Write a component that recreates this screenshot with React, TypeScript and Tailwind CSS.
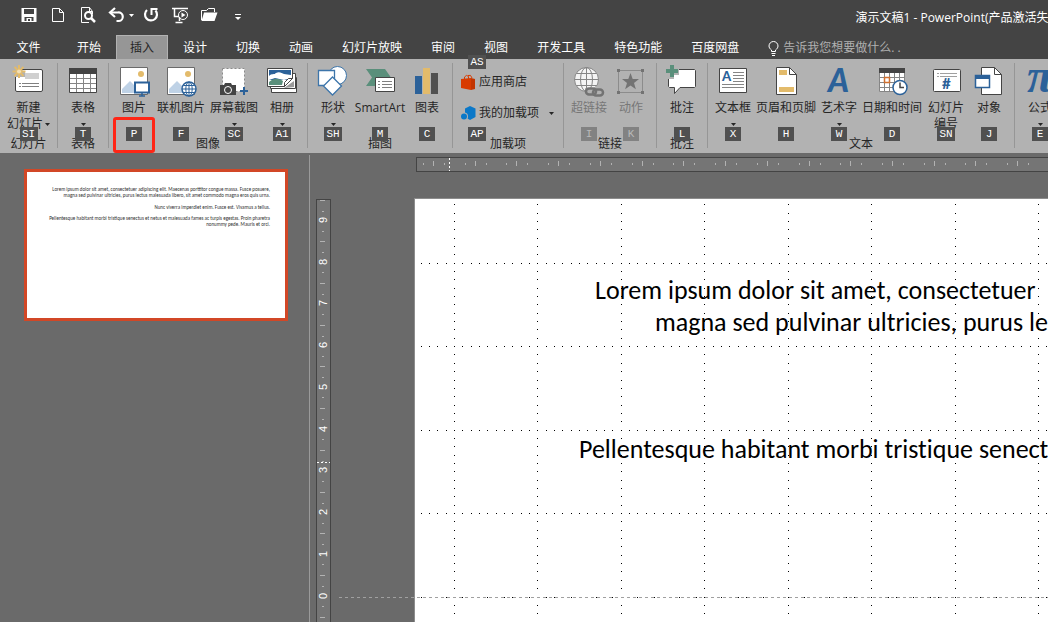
import type { ReactNode } from "react";
import clsx from "clsx";

const INK = "#444444";
const BLUE = "#2b6199";
const GREEN = "#5a8f7b";
const SAND = "#e3bb6b";

const Icon = ({ children, size = 32 }: { children: ReactNode; size?: number }) => (
    <svg width={size} height={size} viewBox={`0 0 ${size} ${size}`} fill="none" className="shrink-0 overflow-visible" aria-hidden="true">
        {children}
    </svg>
);

const Caret = () => (
    <svg width="5" height="3" viewBox="0 0 5 3" className="shrink-0" aria-hidden="true">
        <path d="M0 0h5L2.5 3z" fill="currentColor" />
    </svg>
);

/* ---------- quick access icons ---------- */

const SaveIcon = () => (
    <Icon size={18}>
        <path d="M1.5 1h15v14h-15z" fill="#fff" />
        <path d="M4 2h10v5H4zM4.500 10h9v4h-9z" fill={INK} />
        <path d="M6.500 11h5v4h-5z" fill="#fff" />
        <path d="M8 12h2v2H8z" fill={INK} />
    </Icon>
);

const NewIcon = () => (
    <Icon size={18}>
        <path d="M3.500 1.500h7l4 4v9h-11zM10.500 1.500v4h4" stroke="#fff" />
    </Icon>
);

const PreviewIcon = () => (
    <Icon size={18}>
        <path d="M14.500 7V4.500l-3-4h-8v15H11M11.500 .5v4h3" stroke="#fff" />
        <circle cx="10.500" cy="8.500" r="3.500" stroke="#fff" strokeWidth="2" />
        <path d="M13 11l4 4" stroke="#fff" strokeWidth="2.500" />
    </Icon>
);

const UndoIcon = () => (
    <Icon size={18}>
        <path d="M3 5.500h8a4 4 0 0 1 1 8.500H9.500" stroke="#fff" strokeWidth="2.200" />
        <path d="M8 1L3 5.500 8 10" stroke="#fff" strokeWidth="2.200" />
    </Icon>
);

const RedoIcon = () => (
    <Icon size={18}>
        <path d="M5 3A6 6 0 1 0 13.500 3.500" stroke="#fff" strokeWidth="2.200" />
        <path d="M9.500 8V2h6" stroke="#fff" strokeWidth="2" />
    </Icon>
);

const ShowIcon = () => (
    <Icon size={18}>
        <path d="M1 1.500h16M3.500 2v7.500H8M8.500 10v4M4.500 15.500h7" stroke="#fff" strokeWidth="1.500" />
        <circle cx="12" cy="8" r="4.500" stroke="#fff" />
        <path d="M10.500 5.500v5l4-2.500z" fill="#fff" />
    </Icon>
);

const OpenIcon = () => (
    <Icon size={18}>
        <path d="M1.500 13V3.500h5l2-2h6V5" stroke="#fff" />
        <path d="M4 5.500h13.500l-3 8.500H1.500z" fill="#fff" />
    </Icon>
);

const CustomizeIcon = () => (
    <Icon size={18}>
        <path d="M6 7.500h6" stroke="#fff" />
        <path d="M6 10h6l-3 3z" fill="#fff" />
    </Icon>
);

/* ---------- ribbon icons ---------- */

const NewSlideIcon = () => (
    <Icon>
        <rect x="2.500" y="3.500" width="27" height="22" rx="1.500" fill="#fff" stroke={INK} />
        <path d="M12 7h14v6H12z" fill="#d0d0d0" />
        <path d="M6 17.500h2M9 17.500h17M6 20.500h2M9 20.500h17" stroke="#808080" />
        <path d="M0 2h6l6 4v5H1z" fill="#b2b2b2" />
        <path d="M6 -1v4M6 8v4M-.500 5.500h4M8.500 5.500h4M1.500 1l3 3M7.500 7l3 3M10.500 1l-3 3M4.500 7l-3 3" stroke={SAND} strokeWidth="2" />
        <circle cx="6" cy="5.500" r="2.500" fill="#f3dfb4" stroke={SAND} />
    </Icon>
);

const TableIcon = () => (
    <Icon>
        <path d="M2.500 2.500h27v24h-27z" fill="#fff" stroke={INK} />
        <path d="M2 2h28v6H2z" fill={INK} />
        <path d="M9.500 8v18M16.500 8v18M23.500 8v18M3 12.500h26M3 17.500h26M3 22.500h26" stroke="#858585" />
    </Icon>
);

const Photo = () => (
    <>
        <path d="M2.500 1.500h27v27h-27z" fill="#fff" stroke="#6a6a6a" />
        <path d="M4 27v-4l8-8 7 7v5z" fill="#bfd2e6" />
        <circle cx="23" cy="8" r="3" fill={SAND} />
    </>
);

const PictureIcon = () => (
    <Icon>
        <Photo />
        <path d="M17 16.500h14v10H17z" fill="#fff" stroke={BLUE} strokeWidth="2" />
        <path d="M24 27v3M21 30h6" stroke={BLUE} strokeWidth="1.500" />
    </Icon>
);

const OnlinePictureIcon = () => (
    <Icon>
        <Photo />
        <circle cx="24" cy="23" r="7" fill="#fff" stroke={BLUE} strokeWidth="1.500" />
        <ellipse cx="24" cy="23" rx="3.200" ry="7" stroke={BLUE} />
        <path d="M24 16v14M17 23h14M18.500 19.500h11M18.500 26.500h11" stroke={BLUE} />
    </Icon>
);

const ScreenshotIcon = () => (
    <Icon>
        <path d="M4.500 2.500h22v23h-22z" fill="#fff" stroke="#8a8a8a" strokeDasharray="2 2" />
        <path d="M2 19h4l1-2h6l1 2h4v10H2z" fill={INK} />
        <circle cx="10" cy="24" r="3.500" stroke="#fff" />
        <path d="M26 21v8M22 25h8" stroke={BLUE} strokeWidth="2" />
    </Icon>
);

const AlbumIcon = () => (
    <Icon>
        <path d="M5.500 11.500h25v15h-25z" fill="#fff" stroke={INK} />
        <path d="M4.500 7.500h25v15h-25z" fill="#fff" stroke={INK} />
        <path d="M18 22l10-7v6z" fill="#9a9a9a" />
        <path d="M1.500 2.500h25v10l-8 8h-17z" fill="#fff" stroke={INK} />
        <path d="M3 4h22v7l-4 3H3z" fill={BLUE} />
        <path d="M3 10c3-3 5-1 7-3 3-2 6 0 8 1l7 1v3l-7 2-9-2-6 2z" fill="#fff" />
        <path d="M3 16c5-4 9-4 14-1l-1 4H3z" fill={GREEN} />
        <path d="M18.500 20.500v-4l4-4h4z" fill="#fff" stroke={INK} />
    </Icon>
);

const ShapesIcon = () => (
    <Icon>
        <circle cx="20.500" cy="9.500" r="9" fill="#fff" stroke="#3d75aa" />
        <path d="M1.500 4.500h16v15h-16z" fill="#fff" stroke="#3d75aa" strokeWidth="1.300" />
        <path d="M15.500 11l9 9-9 9-9-9z" fill="#fff" stroke="#3d75aa" strokeWidth="1.300" />
    </Icon>
);

const SmartArtIcon = () => (
    <Icon>
        <path d="M2 3h19l6 8.500L21 20H2l6-8.500z" fill={GREEN} />
        <path d="M11.500 11.500h19v14h-19z" fill="#fff" stroke={INK} />
        <path d="M14 15.500h2M18 15.500h10M14 18.500h2M18 18.500h10M14 21.500h2M18 21.500h10" stroke="#808080" />
    </Icon>
);

const ChartIcon = () => (
    <Icon>
        <path d="M4 10h7v18H4z" fill={BLUE} />
        <path d="M12 2h7v26h-7z" fill={SAND} />
        <path d="M20 7h7v21h-7z" fill="#505050" />
    </Icon>
);

const StoreIcon = () => (
    <Icon size={16}>
        <path d="M0 5l10-1v12L0 14z" fill="#d83b01" />
        <path d="M10 4l4 1v10l-4 1z" fill="#c23501" />
        <path d="M3.500 5V3q2-3 4-.500V5M7 1.500q3-1.500 4 2.500" stroke="#d83b01" />
    </Icon>
);

const AddinIcon = () => (
    <Icon size={16}>
        <path d="M9 1l5.500 2.500v8.500L9 15l-5-3V3.500z" fill="#0b78c8" />
        <circle cx="3" cy="11.500" r="4" fill="#b2b2b2" />
        <circle cx="3" cy="11.500" r="3" fill="#0b78c8" />
    </Icon>
);

const LinkIcon = () => (
    <Icon>
        <circle cx="13.500" cy="13.500" r="12" fill="#f4f4f4" stroke="#858585" />
        <ellipse cx="13.500" cy="13.500" rx="6" ry="12" stroke="#858585" />
        <path d="M13.500 1.500v24M1.500 13.500h24M3.500 7.500h20M3.500 19.500h20" stroke="#858585" />
        <path d="M12 22h8l4-2h8v12H12z" fill="#b2b2b2" />
        <rect x="13" y="22.500" width="10" height="6" rx="3" stroke="#737373" strokeWidth="2.500" />
        <rect x="20" y="23.500" width="10" height="6" rx="3" stroke="#737373" strokeWidth="2.500" />
    </Icon>
);

const ActionIcon = () => (
    <Icon>
        <path d="M3.500 4.500h24v22h-24z" stroke="#8c8c8c" />
        <path d="M2 3h3v3H2zM26 3h3v3h-3zM2 25h3v3H2zM26 25h3v3h-3z" fill="#737373" />
        <path d="M15.500 7l2.200 6h6.300l-5 3.900 1.900 6.300-5.400-3.800-5.400 3.800 1.900-6.300L7 13h6.300z" fill="#737373" />
    </Icon>
);

const CommentIcon = () => (
    <Icon>
        <path d="M3.500 3.500h25l1 1v16l-1 1H14l-5.500 6v-6h-5l-1-1v-16z" fill="#fff" stroke={INK} />
        <path d="M-1 -2h9v5h5v6H8v4H-1z" fill="#b2b2b2" />
        <path d="M6 -1v12M0 5h12" stroke={GREEN} strokeWidth="4" />
    </Icon>
);

const TextBoxIcon = () => (
    <Icon>
        <path d="M2.500 2.500h27v24h-27z" fill="#fff" stroke={INK} />
        <text x="5" y="15" fill={BLUE} className="font-[Lato] text-[13px] font-black">A</text>
        <path d="M16 6.500h11M16 9.500h11M16 12.500h11M16 15.500h11M5 18.500h22M5 21.500h22" stroke="#858585" />
    </Icon>
);

const HeaderFooterIcon = () => (
    <Icon>
        <path d="M6.500 1.500h13l7 7v20h-20z" fill="#fff" stroke={INK} />
        <path d="M19.500 1.500v7h7" stroke={INK} />
        <path d="M9 4h8v5H9zM9 21h15v5H9z" fill={SAND} />
    </Icon>
);

const WordArtIcon = () => (
    <Icon>
        <text x="5" y="26" fill={BLUE} className="font-[Lato] text-[32px] font-black italic">A</text>
    </Icon>
);

const DateIcon = () => (
    <Icon>
        <path d="M3.500 2.500h25v23h-25z" fill="#fff" stroke="#858585" />
        <path d="M3 2h26v5H3z" fill={INK} />
        <path d="M8.500 7v18M13.500 7v18M18.500 7v18M23.500 7v18M4 11.500h25M4 16.500h25M4 21.500h25" stroke="#858585" />
        <path d="M8.500 11.500h5v5h-5z" stroke="#d07030" strokeWidth="1.500" />
        <circle cx="24" cy="21.500" r="7" fill="#fff" stroke={BLUE} strokeWidth="1.500" />
        <path d="M24 16.500v5h4" stroke={INK} strokeWidth="1.500" />
    </Icon>
);

const SlideNumberIcon = () => (
    <Icon>
        <rect x="3.500" y="3.500" width="27" height="22" rx="1" fill="#fff" stroke={INK} />
        <path d="M7 7.500h2M10 7.500h17M7 10.500h2M10 10.500h17" stroke="#a0a0a0" />
        <text x="12" y="23" fill={BLUE} className="font-[Lato] text-[15px] font-black">#</text>
    </Icon>
);

const ObjectIcon = () => (
    <Icon>
        <path d="M8.500 1.500h13l7 7v20h-20z" fill="#fff" stroke={INK} />
        <path d="M21.500 1.500v7h7" stroke={INK} />
        <path d="M2.500 9.500h14v12h-14z" fill="#fff" stroke={BLUE} strokeWidth="1.500" />
        <path d="M2 9h15v4H2z" fill={BLUE} />
    </Icon>
);

const FormulaIcon = () => (
    <Icon>
        <text x="3" y="26" fill={BLUE} className="font-['Liberation_Serif'] text-[48px] font-bold italic">π</text>
    </Icon>
);

const SymbolIcon = () => (
    <Icon>
        <text x="4" y="26" fill={INK} className="font-['Liberation_Serif'] text-[32px]">Ω</text>
    </Icon>
);

/* ---------- ribbon parts ---------- */

const KeyTip = ({ text, className = "top-16", dim = false }: { text: string; className?: string; dim?: boolean }) => (
    <span
        className={clsx(
            "absolute left-1/2 z-10 h-[14px] -translate-x-1/2 text-center font-['Liberation_Mono',monospace] text-[11px] leading-[14px]",
            text.length > 1 ? "w-[18px]" : "w-4",
            dim ? "bg-[#828282] text-[#b9b9b9]" : "bg-[#505050] text-white",
            className
        )}
    >
        {text}
    </span>
);

type ToolProps = {
    icon: ReactNode;
    label: string;
    second?: string;
    tip?: string;
    width?: string;
    caret?: boolean;
    dim?: boolean;
    marked?: boolean;
};

const Tool = ({ icon, label, second, tip, width = "w-[42px]", caret, dim, marked }: ToolProps) => (
    <button
        disabled={dim}
        className={clsx("relative flex h-[72px] shrink-0 flex-col items-center pt-[3px] whitespace-nowrap", width, dim && "text-[#777777]")}
    >
        {icon}
        <span className="mt-0.5 leading-4">{label}</span>
        {(second || caret) && (
            <span className="flex h-4 items-center gap-0.5 leading-4">
                {second}
                {caret && <Caret />}
            </span>
        )}
        {tip && <KeyTip text={tip} dim={dim} />}
        {marked && <span className="absolute top-[54px] left-0 z-20 h-9 w-full rounded-[3px] border-3 border-[#ff2616]" />}
    </button>
);

const Group = ({ label, children }: { label: string; children: ReactNode }) => (
    <section aria-label={label} className="flex shrink-0">
        <div className="flex flex-col px-1">
            <div className="flex h-[72px]">{children}</div>
            <p className="text-center leading-[18px]">{label}</p>
        </div>
        <div className="h-[85px] w-px bg-[#969696]" />
    </section>
);

const Ribbon = () => (
    <div className="flex h-[94px] shrink-0 overflow-x-clip bg-[#b2b2b2] pt-1 text-[#262626]">
        <Group label="幻灯片">
            <Tool icon={<NewSlideIcon />} label="新建" second="幻灯片" tip="SI" width="w-[49px]" caret />
        </Group>
        <Group label="表格">
            <Tool icon={<TableIcon />} label="表格" tip="T" caret />
        </Group>
        <Group label="图像">
            <Tool icon={<PictureIcon />} label="图片" tip="P" marked />
            <Tool icon={<OnlinePictureIcon />} label="联机图片" tip="F" width="w-[52px]" />
            <Tool icon={<ScreenshotIcon />} label="屏幕截图" tip="SC" width="w-[54px]" caret />
            <Tool icon={<AlbumIcon />} label="相册" tip="A1" caret />
        </Group>
        <Group label="插图">
            <Tool icon={<ShapesIcon />} label="形状" tip="SH" caret />
            <Tool icon={<SmartArtIcon />} label="SmartArt" tip="M" width="w-[52px]" />
            <Tool icon={<ChartIcon />} label="图表" tip="C" />
        </Group>
        <Group label="加载项">
            <div className="flex w-[102px] flex-col items-start gap-[15px] pt-[11px] pl-1">
                <button className="relative flex items-center gap-0.5 leading-4">
                    <StoreIcon />
                    应用商店
                    <span className="absolute -top-[19px] left-4"><KeyTip text="AS" className="top-0" /></span>
                </button>
                <button className="relative flex items-center gap-0.5 leading-4">
                    <AddinIcon />
                    我的加载项
                    <span className="pl-2"><Caret /></span>
                    <span className="absolute top-[22px] left-4"><KeyTip text="AP" className="top-0" /></span>
                </button>
            </div>
        </Group>
        <Group label="链接">
            <Tool icon={<LinkIcon />} label="超链接" tip="I" dim />
            <Tool icon={<ActionIcon />} label="动作" tip="K" dim />
        </Group>
        <Group label="批注">
            <Tool icon={<CommentIcon />} label="批注" tip="L" />
        </Group>
        <Group label="文本">
            <Tool icon={<TextBoxIcon />} label="文本框" tip="X" caret />
            <Tool icon={<HeaderFooterIcon />} label="页眉和页脚" tip="H" width="w-16" />
            <Tool icon={<WordArtIcon />} label="艺术字" tip="W" caret />
            <Tool icon={<DateIcon />} label="日期和时间" tip="D" width="w-16" />
            <Tool icon={<SlideNumberIcon />} label="幻灯片" second="编号" tip="SN" width="w-11" />
            <Tool icon={<ObjectIcon />} label="对象" tip="J" />
        </Group>
        <Group label="符号">
            <Tool icon={<FormulaIcon />} label="公式" tip="E" caret />
            <Tool icon={<SymbolIcon />} label="符号" />
        </Group>
    </div>
);

/* ---------- title bar and tabs ---------- */

const quickLeft = [
    { name: "保存", icon: <SaveIcon /> },
    { name: "新建", icon: <NewIcon /> },
    { name: "打印预览", icon: <PreviewIcon /> },
    { name: "撤消", icon: <UndoIcon /> },
];

const quickRight = [
    { name: "恢复", icon: <RedoIcon /> },
    { name: "从头开始", icon: <ShowIcon /> },
    { name: "打开", icon: <OpenIcon /> },
    { name: "自定义", icon: <CustomizeIcon /> },
];

const tabs = ["开始", "插入", "设计", "切换", "动画", "幻灯片放映", "审阅", "视图", "开发工具", "特色功能", "百度网盘"];

const TitleBar = () => (
    <header className="flex h-[35px] shrink-0 items-center overflow-hidden pb-1 pl-5 text-white">
        <div className="flex gap-[11px]">
            {quickLeft.map((q) => (
                <button key={q.name} aria-label={q.name}>{q.icon}</button>
            ))}
        </div>
        <button aria-label="撤消选项" className="px-1"><Caret /></button>
        <div className="ml-1 flex gap-[11px]">
            {quickRight.map((q) => (
                <button key={q.name} aria-label={q.name}>{q.icon}</button>
            ))}
        </div>
        <h1 className="-mr-4 ml-auto pt-1 whitespace-nowrap">演示文稿1 - PowerPoint(产品激活失败)</h1>
    </header>
);

const Tabs = () => (
    <nav className="flex h-6 shrink-0 items-stretch gap-px text-white">
        <button className="mr-[5px] w-[57px] pt-px">文件</button>
        {tabs.map((tab) => (
            <button
                key={tab}
                className={clsx(
                    "border border-b-0 px-[13px] whitespace-nowrap",
                    tab === "插入" ? "border-[#b2b2b2] bg-[#969696] text-[#262626]" : "border-transparent"
                )}
            >
                {tab}
            </button>
        ))}
        <label className="ml-3.5 flex items-center gap-1 pt-0.5">
            <svg width="11" height="15" viewBox="0 0 11 15" fill="none" stroke="#fff" aria-hidden="true">
                <path d="M3.500 10.500v-1.500C2 8 1 6.500 1 5a4.500 4.500 0 0 1 9 0c0 1.500-1 3-2.500 4v1.500z" />
                <path d="M3.500 12.500h4M4 14.500h3" />
            </svg>
            <input
                aria-label="操作说明搜索"
                placeholder="告诉我您想要做什么. ."
                className="w-40 bg-transparent outline-none placeholder:text-[#b0b0b0]"
            />
        </label>
    </nav>
);

/* ---------- workspace ---------- */

// one ruler unit is 41.725px, a grid dot sits every fifth of it
const UNIT = 41.725;
const STEP = 8.345;

const HorizontalRuler = () => (
    <div className="relative ml-[106px] h-[15px] shrink-0 overflow-hidden border border-r-0 border-[#444444] bg-[#757575]">
        <svg width="100%" height="13" aria-hidden="true" shapeRendering="crispEdges">
            {Array.from({ length: 60 }, (_, i) => {
                const x = Math.floor(16.5 + i * UNIT);
                return (
                    <g key={i} fill="#b2b2b2">
                        <rect x={x - 10} y="5" width="1" height="2" />
                        <rect x={x} y="3" width="1" height="5" />
                        <rect x={x + 11} y="5" width="1" height="2" />
                    </g>
                );
            })}
        </svg>
        <div className="absolute inset-y-0 left-8 w-px bg-[repeating-linear-gradient(180deg,#fff_0_2px,transparent_2px_4px)]" />
    </div>
);

const VerticalRuler = () => (
    <div className="relative mt-px ml-1.5 w-[15px] shrink-0 overflow-hidden border border-b-0 border-[#444444] bg-[#757575]">
        <svg width="13" height="100%" aria-hidden="true" shapeRendering="crispEdges">
            {Array.from({ length: 40 }, (_, i) => {
                const y = Math.floor(i * UNIT);
                return (
                    <g key={i} fill="#b2b2b2">
                        <rect x="3" y={y} width="5" height="1" />
                        <rect x="5" y={y + 11} width="2" height="1" />
                        <rect x="5" y={y + 31} width="2" height="1" />
                    </g>
                );
            })}
            {Array.from({ length: 10 }, (_, i) => (
                <text
                    key={i}
                    transform={`translate(10 ${Math.round(23 + i * UNIT)}) rotate(-90)`}
                    fill="#fff"
                    className="font-['Liberation_Sans'] text-[11px]"
                >
                    {9 - i}
                </text>
            ))}
        </svg>
        <div className="absolute top-[262px] left-0 h-px w-full bg-[repeating-linear-gradient(90deg,#fff_0_2px,transparent_2px_4px)]" />
    </div>
);

const cols = Array.from({ length: 240 }, (_, i) => Math.floor(39.4 + (i - 4) * STEP));
const rows = Array.from({ length: 130 }, (_, i) => Math.floor(398 + (i - 47) * STEP));

const gridPath = [
    ...cols.flatMap((x) => rows.filter((_, r) => (r + 3) % 10 === 0).map((y) => `M${x} ${y}h1v1h-1z`)),
    ...rows.flatMap((y) => cols.filter((_, c) => (c + 6) % 10 === 0).map((x) => `M${x} ${y}h1v1h-1z`)),
].join("");

const Slide = () => (
    <div className="relative ml-[83px] min-w-0 flex-1 overflow-hidden border-t border-l border-[#8d8d8d] bg-white">
        <div className="pt-[75px] font-[Carlito,'Open_Sans',sans-serif] text-[26px] leading-8 whitespace-nowrap text-black [font-variant-ligatures:none]">
            <p className="pl-[180px]">Lorem ipsum dolor sit amet, consectetuer</p>
            <p className="pl-60">magna sed pulvinar ultricies, purus lectus</p>
            <p className="mt-[95px] pl-[164px]">Pellentesque habitant morbi tristique senectus</p>
        </div>
        <svg className="absolute inset-0 h-full w-full" aria-hidden="true" shapeRendering="crispEdges">
            <path d={gridPath} fill="#000" />
        </svg>
    </div>
);

const Thumbnail = () => (
    <button
        aria-label="幻灯片 1"
        className="mt-3.5 ml-6 block h-[152px] w-[264px] border-3 border-[#d24726] bg-white pt-3.5 pr-[15px] text-right font-[Carlito,'Open_Sans',sans-serif] text-[5px] leading-[6px] whitespace-nowrap text-[#303030]"
    >
        <span className="flex h-full flex-col">
            <span>Lorem ipsum dolor sit amet, consectetuer adipiscing elit. Maecenas porttitor congue massa. Fusce posuere,</span>
            <span>magna sed pulvinar ultricies, purus lectus malesuada libero, sit amet commodo magna eros quis urna.</span>
            <span className="mt-1.5">Nunc viverra imperdiet enim. Fusce est. Vivamus a tellus.</span>
            <span className="mt-[5px]">Pellentesque habitant morbi tristique senectus et netus et malesuada fames ac turpis egestas. Proin pharetra</span>
            <span>nonummy pede. Mauris et orci.</span>
        </span>
    </button>
);

const App = () => {
    return (
        <div className="flex h-screen flex-col overflow-hidden bg-[#444444] font-['Open_Sans','Noto_Sans_CJK_SC',sans-serif] text-xs">
            <TitleBar />
            <Tabs />
            <Ribbon />
            <div className="flex min-h-0 flex-1 bg-[#6a6a6a]">
                <aside className="mt-0.5 w-[310px] shrink-0 border-r border-[#9a9a9a]">
                    <Thumbnail />
                </aside>
                <main className="flex min-w-0 flex-1 flex-col pt-1">
                    <HorizontalRuler />
                    <div className="relative mt-[26px] flex min-h-0 flex-1">
                        <VerticalRuler />
                        <Slide />
                        <div className="absolute top-[399px] right-0 left-[29px] h-px bg-[repeating-linear-gradient(90deg,#a0a0a0_0_3px,transparent_3px_6px)]" />
                    </div>
                </main>
            </div>
        </div>
    );
};

export default App;
